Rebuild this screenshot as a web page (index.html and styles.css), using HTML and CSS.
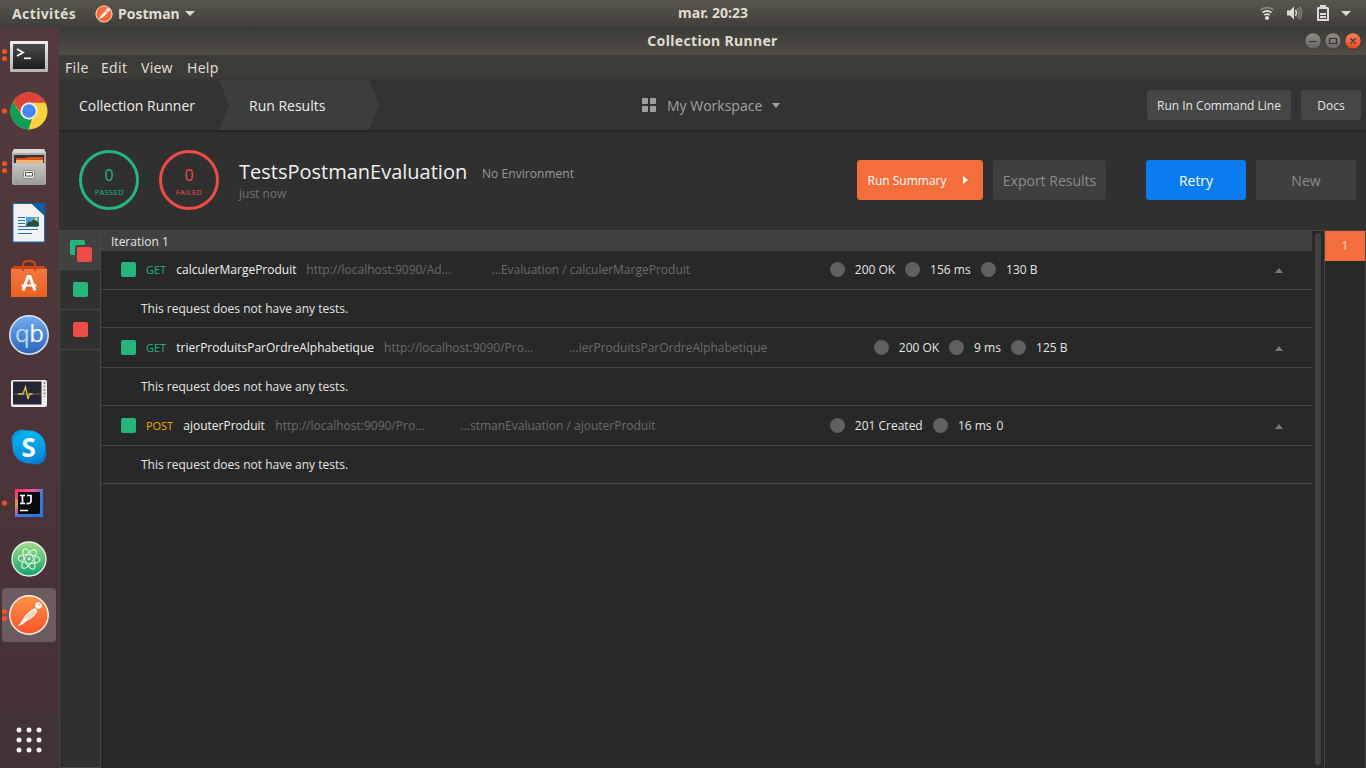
FILE: index.html
```html
<!DOCTYPE html>
<html lang="fr">
<head>
<meta charset="utf-8">
<title>Collection Runner</title>
<link rel="stylesheet" href="styles.css">
</head>
<body>
<div class="desktop">
<header class="topbar">
  <span class="activities">Activités</span>
  <svg class="app-logo" width="18" height="18" viewBox="0 0 40 40"><circle cx="20" cy="20" r="18" fill="#ff6c37" stroke="#f3ddd3" stroke-width="2.2"/><path d="M9 31l4-7 11-11 4 4-11 10z" fill="#fff"/><circle cx="29" cy="11" r="4" fill="#fff"/></svg>
  <span class="app-name">Postman</span>
  <i class="caret app-caret"></i>
  <span class="clock">mar. 20:23</span>
  <svg class="tray" width="106" height="27" viewBox="0 0 106 27">
    <g fill="none" stroke="#dcdad5" stroke-width="1.8"><path d="M.5 10q6.500-4.500 13 0" stroke="#858279"/><path d="M2.500 12.500q4.500-3 9 0M4.300 15q2.700-1.800 5.400 0"/></g><circle cx="7" cy="18" r="2.100" fill="#dcdad5"/>
    <path d="M27 10.500h3l4-4v13l-4-4h-3z" fill="#dcdad5"/><path d="M35.500 10q2 3 0 6" fill="none" stroke="#dcdad5" stroke-width="1.500"/><path d="M37.500 8q3.500 5 0 10M39.500 6.500q4 6.500 0 13" fill="none" stroke="#858279" stroke-width="1.500"/>
    <path d="M60 5h6v2h2l1 1v13H57V8l1-1h2z" fill="#dcdad5"/><path d="M59 9h8v10h-8z" fill="#4a4740"/><path d="M60 13h6v2h-6zM60 16h6v2h-6z" fill="#dcdad5"/>
    <path d="M81 11h10l-5 5z" fill="#dcdad5"/>
  </svg>
</header>
<div class="workarea">
<nav class="dock">
  <svg width="59" height="741" viewBox="0 27 59 741">
    <defs>
      <linearGradient id="term" x2="0" y2="1"><stop stop-color="#4b4b4b"/><stop offset="1" stop-color="#1d1d1d"/></linearGradient>
      <linearGradient id="silver" x2="0" y2="1"><stop stop-color="#eee"/><stop offset="1" stop-color="#b4b4b4"/></linearGradient>
      <linearGradient id="cab" x2="0" y2="1"><stop stop-color="#c6c6c3"/><stop offset="1" stop-color="#9b9b98"/></linearGradient>
      <linearGradient id="bag" x2="0" y2="1"><stop stop-color="#f27b45"/><stop offset="1" stop-color="#e9601f"/></linearGradient>
      <linearGradient id="qb" x2="0" y2="1"><stop stop-color="#72aef0"/><stop offset="1" stop-color="#2c62b8"/></linearGradient>
      <linearGradient id="sky" x2="0" y2="1"><stop stop-color="#00b7f0"/><stop offset="1" stop-color="#0784d7"/></linearGradient>
      <linearGradient id="atom" x2="0" y2="1"><stop stop-color="#a5dd8b"/><stop offset="1" stop-color="#11a36f"/></linearGradient>
      <linearGradient id="pm" x2="0" y2="1"><stop stop-color="#ff9148"/><stop offset="1" stop-color="#ff5427"/></linearGradient>
      <linearGradient id="ij" x2="1" y2="1"><stop stop-color="#fe315d"/><stop offset=".35" stop-color="#f8549d"/><stop offset=".55" stop-color="#4778d7"/><stop offset="1" stop-color="#167bf0"/></linearGradient>
    </defs>
    <rect x="2" y="588" width="54" height="54" rx="4" fill="#fff" fill-opacity=".2"/>
    <g fill="#e95420"><circle cx="4.500" cy="51.500" r="2.600"/><circle cx="4.500" cy="58.500" r="2.600"/><circle cx="4.500" cy="111" r="2.600"/><circle cx="4.500" cy="163.500" r="2.600"/><circle cx="4.500" cy="170.500" r="2.600"/><circle cx="4.500" cy="503" r="2.600"/><circle cx="4.500" cy="611.500" r="2.600"/><circle cx="4.500" cy="618.500" r="2.600"/></g>
    <!-- Terminal -->
    <rect x="10" y="41" width="38" height="31" rx="1" fill="url(#silver)"/><rect x="13" y="44" width="32" height="25" fill="url(#term)"/><path d="M17 49l6 3.500-6 3.500" fill="none" stroke="#f4f4f4" stroke-width="1.900"/><path d="M24 58.300h7" stroke="#fff" stroke-width="1.600"/>
    <!-- Chrome -->
    <circle cx="29" cy="111" r="18.500" fill="#fdd13f"/><path d="M13 101.700A18.500 18.500 0 0 1 45.600 102.700H29A8.500 8.500 0 0 0 21 113.500z" fill="#db4437"/><path d="M13 101.700L21.700 115.400A8.500 8.500 0 0 0 32 119L28.500 129.500A18.500 18.500 0 0 1 13 101.700z" fill="#109d58"/><circle cx="29" cy="111" r="8.400" fill="#f4f4f4"/><circle cx="29" cy="111" r="6.800" fill="#4587f5"/>
    <!-- Files -->
    <path d="M14 149h30l2 4v30l-1 2H13l-1-2v-30z" fill="#adadaa"/><path d="M14 149h30l2 4H12z" fill="#d8d8d5"/><path d="M14 155h30v9H14z" fill="#35302d"/><path d="M16 158h10l2-1h15v7H16z" fill="#d9511b"/><path d="M16 160h27v3H16z" fill="#f4b572"/><path d="M13 163h32v22H13z" fill="url(#cab)"/><rect x="23.500" y="170.500" width="11" height="8" rx="2" fill="#ebebe8" stroke="#888"/><path d="M25.500 172.500h7v3.500h-7z" fill="#fff" stroke="#555"/>
    <!-- Writer -->
    <path d="M13 203.500h19l12.500 12v26.500H13z" fill="#f2f2f2" stroke="#1071b3"/><path d="M31 203h14v13z" fill="#0761a0"/><path d="M18 217.500h7M18 220.500h7M18 223.500h7M18 226.500h20M18 229.500h20M18 233.500h14" stroke="#2377ab" stroke-width="1.200"/><path d="M26 217h13v9H26z" fill="#4aa7e5"/><path d="M26 225l3-4 2 1 3-3 5 4v3H26z" fill="#304e35"/><circle cx="36" cy="219" r="1.500" fill="#f1d83c"/>
    <!-- Software -->
    <path d="M11 269l4-3h28l4 3v28H11z" fill="url(#bag)"/><path d="M11 269l4-3h28l4 3z" fill="#ce4815"/><path d="M23 271v-6q0-4 6-4t6 4v6" fill="none" stroke="#d44417" stroke-width="2"/><path d="M23 290.500l5-14h2l5 14" fill="none" stroke="#fff" stroke-width="3"/><path d="M21.500 285.500h15" stroke="#fff" stroke-width="2.200"/>
    <!-- qBittorrent -->
    <circle cx="29" cy="335" r="19.200" fill="url(#qb)" stroke="#dde8f5" stroke-width="1.500"/><text x="15" y="342" class="qb-text" fill="#bcdcff">q<tspan fill="#fff">b</tspan></text>
    <!-- System monitor -->
    <rect x="11" y="380" width="36" height="27" rx="2" fill="#eee"/><path d="M13 381.500h28.500v23H13z" fill="#282636"/><path d="M14 394h27" stroke="#6b6846"/><path d="M18 394h5l2.500-7 2.500 12 1.500-5h3" fill="none" stroke="#d6c44c" stroke-width="1.300"/><path d="M44.500 382v15" stroke="#999" stroke-width="2" stroke-dasharray="2 1.500"/>
    <!-- Skype -->
    <circle cx="22" cy="440" r="10.500" fill="#0796dc"/><circle cx="36" cy="454" r="10.500" fill="#087ccb"/><circle cx="29" cy="447" r="16.500" fill="url(#sky)"/><text x="21.500" y="456.500" class="skype-text">S</text>
    <!-- IntelliJ -->
    <path d="M15 489h28v28H15z" fill="url(#ij)"/><path d="M15 498l5 5-5 8z" fill="#d39749"/><path d="M18 492h22v22H18z" fill="#090909"/><path d="M20 495.500h5M22.500 495.500v8M20 503.500h5M27 495.500h4v5.500q0 3-4.500 2.500" fill="none" stroke="#fff" stroke-width="1.700"/><path d="M20 510.500h8" stroke="#fff" stroke-width="1.500"/>
    <!-- Atom -->
    <circle cx="29" cy="559" r="17" fill="url(#atom)" stroke="#eef2ee" stroke-width="1.300"/><g fill="none" stroke="#e4f7e6" stroke-width="1"><ellipse cx="29" cy="559" rx="11" ry="4.300" transform="rotate(5 29 559)"/><ellipse cx="29" cy="559" rx="11" ry="4.300" transform="rotate(65 29 559)"/><ellipse cx="29" cy="559" rx="11" ry="4.300" transform="rotate(125 29 559)"/></g><circle cx="29" cy="559" r="1.300" fill="#fff"/>
    <!-- Postman -->
    <circle cx="29" cy="615" r="19.200" fill="url(#pm)" stroke="#fff4ee" stroke-width="1.400"/><path d="M17.500 626l3-3 4-6.500q5-6 10.500-8.500l2.500 3q-3 6-10 9.500l-6 4.500z" fill="#fff"/><path d="M25 618l9-7M27.500 619l8-7" stroke="#f6794a" stroke-width=".8"/><circle cx="38.500" cy="605.500" r="3.300" fill="#fff"/><path d="M38 605l2.500-1" stroke="#f6794a"/>
    <g fill="#f1efee"><circle cx="19" cy="730" r="2.500"/><circle cx="29" cy="730" r="2.500"/><circle cx="39" cy="730" r="2.500"/><circle cx="19" cy="740" r="2.500"/><circle cx="29" cy="740" r="2.500"/><circle cx="39" cy="740" r="2.500"/><circle cx="19" cy="750" r="2.500"/><circle cx="29" cy="750" r="2.500"/><circle cx="39" cy="750" r="2.500"/></g>
  </svg>
</nav>
<main class="window">
  <div class="titlebar"><span class="title">Collection Runner</span>
    <svg class="controls" width="58" height="20" viewBox="0 0 58 20"><defs><linearGradient id="btn" x2="0" y2="1"><stop stop-color="#918f86"/><stop offset="1" stop-color="#66645d"/></linearGradient><linearGradient id="close" x2="0" y2="1"><stop stop-color="#f98261"/><stop offset="1" stop-color="#df481a"/></linearGradient></defs><g stroke="#34322e" stroke-width=".8"><circle cx="9" cy="10" r="8.200" fill="url(#btn)"/><circle cx="29" cy="10" r="8.200" fill="url(#btn)"/><circle cx="49" cy="10" r="8.200" fill="url(#close)"/></g><path d="M5 10.500h8M25.500 7.500h7v5h-7zM46.500 7.500l5 5M51.500 7.500l-5 5" fill="none" stroke="#35332e" stroke-width="1.200"/></svg>
  </div>
  <div class="menubar"><span class="m-file">File</span><span class="m-edit">Edit</span><span class="m-view">View</span><span class="m-help">Help</span></div>
  <div class="header">
    <div class="crumb first">Collection Runner</div>
    <div class="crumb active">Run Results</div>
    <div class="workspace"><svg width="14" height="14" viewBox="0 0 14 14" fill="#a0a0a0"><rect width="6" height="6" rx=".7"/><rect x="8" width="6" height="6" rx=".7"/><rect y="8" width="6" height="6" rx=".7"/><rect x="8" y="8" width="6" height="6" rx=".7"/></svg><span>My Workspace</span><i class="caret"></i></div>
    <div class="header-actions"><button class="btn-cli">Run In Command Line</button><button class="btn-docs">Docs</button></div>
  </div>
  <section class="summary">
    <div class="score passed"><b>0</b><span>PASSED</span></div>
    <div class="score failed"><b>0</b><span>FAILED</span></div>
    <div class="run-info"><div class="run-line"><h1>TestsPostmanEvaluation</h1><span class="environment">No Environment</span></div><div class="when">just now</div></div>
    <div class="run-actions"><button class="primary">Run Summary<i></i></button><button class="export">Export Results</button><button class="retry">Retry</button><button class="new">New</button></div>
  </section>
  <section class="results">
    <aside class="filters"><div class="filter selected"><svg width="22" height="22" viewBox="0 0 22 22"><rect width="15" height="15" rx="2" fill="#26b47f"/><rect x="5" y="5" width="17" height="17" rx="3" fill="#414141"/><rect x="7" y="7" width="15" height="15" rx="2" fill="#ed4b48"/></svg></div><div class="filter"><i class="square"></i></div><div class="filter"><i class="square red"></i></div></aside>
    <div class="list">
      <div class="iteration">Iteration 1</div>
      <div class="request row-one"><i class="square"></i><span class="method">GET</span><span class="name">calculerMargeProduit</span><span class="url">http://localhost:9090/Ad...</span><span class="path">...Evaluation / calculerMargeProduit</span><i class="dot"></i><span class="status">200 OK</span><i class="dot"></i><span class="time">156 ms</span><i class="dot"></i><span class="size">130 B</span><i class="up"></i></div>
      <div class="tests">This request does not have any tests.</div>
      <div class="request row-two"><i class="square"></i><span class="method">GET</span><span class="name">trierProduitsParOrdreAlphabetique</span><span class="url">http://localhost:9090/Pro...</span><span class="path">...ierProduitsParOrdreAlphabetique</span><i class="dot"></i><span class="status">200 OK</span><i class="dot"></i><span class="time">9 ms</span><i class="dot"></i><span class="size">125 B</span><i class="up"></i></div>
      <div class="tests">This request does not have any tests.</div>
      <div class="request row-three"><i class="square"></i><span class="method post">POST</span><span class="name">ajouterProduit</span><span class="url">http://localhost:9090/Pro...</span><span class="path">...stmanEvaluation / ajouterProduit</span><i class="dot"></i><span class="status">201 Created</span><i class="dot"></i><span class="time">16 ms</span><span class="size">0</span><i class="up"></i></div>
      <div class="tests">This request does not have any tests.</div>
    </div>
    <div class="scroll"><i></i></div>
    <div class="iterations"><div>1</div></div>
  </section>
</main>
</div>
</div>
</body>
</html>
```
FILE: styles.css
```css
* { box-sizing: border-box; }
body { margin: 0; background: #282828; font: 12px "Open Sans", sans-serif; color: #e4e4e4; }
button { border: 0; padding: 0; margin: 0; font: inherit; color: inherit; }
.desktop { width: 1366px; height: 768px; overflow: hidden; display: flex; flex-direction: column; white-space: nowrap; }
.topbar { position: relative; height: 27px; flex: none; display: flex; align-items: center; padding-left: 12px; background: linear-gradient(#59564d, #403e39); color: #dfdbd2; font: bold 14px "Noto Sans", sans-serif; }
.activities { width: 83px; letter-spacing: .38px; }
.app-logo { margin-right: 5px; }
.app-name { width: 67px; }
.caret { display: block; width: 0; height: 0; border: 5px solid transparent; border-top-color: currentColor; border-bottom: 0; }
.clock { position: absolute; left: 678px; top: 3px; letter-spacing: .05px; }
.tray { position: absolute; left: 1260px; top: 0; }
.workarea { display: flex; height: 741px; }
.dock { position: relative; z-index: 2; width: 59px; flex: none; background: linear-gradient(#533a3e, #463137 92%, #403236 93%, #403236); }
.dock svg { display: block; }
.qb-text { font: 24px "Open Sans", sans-serif; letter-spacing: -.5px; }
.skype-text { font: bold 26px "Open Sans", sans-serif; fill: #fff; }
.window { width: 1307px; display: flex; flex-direction: column; }
.titlebar { position: relative; height: 28px; flex: none; background: linear-gradient(#3b3a35, #504d45); text-align: center; font: bold 14px/28px "Noto Sans", sans-serif; letter-spacing: .35px; color: #dfdbd2; }
.controls { position: absolute; right: 4px; top: 4px; }
.menubar { height: 25px; flex: none; background: #3c3b37; display: flex; padding-left: 6px; font: 14px/25px "Noto Sans", sans-serif; letter-spacing: .3px; color: #dfdbd2; }
.m-file { width: 36px; }
.m-edit { width: 40px; }
.m-view { width: 46px; }
.header { position: relative; z-index: 1; height: 50px; flex: none; display: flex; background: #333; box-shadow: 0 1px 3px #1b1b1b; line-height: 51px; font-size: 14px; }
.crumb { color: #ececec; }
.first { width: 160px; padding-left: 20px; }
.active { width: 160px; padding-left: 30px; background: #3d3d3d; clip-path: polygon(0 0, 150px 0, 160px 25px, 150px 50px, 0 50px, 10px 25px); }
.workspace { display: flex; align-items: center; margin-left: 263px; color: #a0a0a0; }
.workspace span { width: 105px; margin-left: 11px; }
.workspace .caret { border-width: 5px 4.5px 0; }
.header-actions { margin-left: auto; padding: 10px 5px 10px 0; display: flex; gap: 10px; font-size: 12px; line-height: 30px; }
.header-actions button { height: 30px; padding-top: 1px; line-height: 29px; background: #464646; border-radius: 3px; }
.btn-cli { width: 144px; }
.btn-docs { width: 60px; }
.summary { height: 100px; flex: none; padding: 20px 10px 20px 20px; display: flex; background: #303030; }
.score { width: 60px; height: 60px; flex: none; border: 3px solid; border-radius: 50%; margin-right: 20px; text-align: center; display: flex; flex-direction: column; align-items: center; }
.score b { font: 16px/20px "Open Sans", sans-serif; margin-top: 12px; }
.score span { font-size: 7px; line-height: 10px; margin-top: 3px; letter-spacing: .2px; transform: scaleX(1.1); }
.passed { color: #26b47f; }
.failed { color: #ed4b48; }
.run-line { display: flex; align-items: center; height: 30px; margin-top: 8px; }
.run-line h1 { width: 243px; margin: 0; font: 20px/28px "Open Sans", sans-serif; color: #f0f0f0; position: relative; top: -1px; }
.environment { color: #989898; letter-spacing: .05px; }
.when { color: #737373; line-height: 14px; margin-top: -1px; }
.run-actions { display: flex; margin: 10px 0 0 auto; }
.run-actions button { height: 40px; border-radius: 3px; font-size: 14px; line-height: 40px; padding-top: 1px; }
.run-actions .primary { display: flex; align-items: center; width: 126px; padding-left: 10.5px; padding-top: 1px; margin-right: 10px; background: #f36e3c; color: #fff; font-size: 12px; }
.primary i { margin-left: 16.5px; margin-top: -1px; border: 4px solid transparent; border-left: 5px solid #fff; border-right: 0; }
.run-actions .export { width: 113px; margin-right: 40px; }
.run-actions .export, .run-actions .new { background: #3f3f3f; color: #8b8b8b; }
.run-actions .retry { width: 100px; margin-right: 10px; background: #097bed; color: #fff; }
.run-actions .new { width: 100px; }
.results { display: flex; flex: 1; min-height: 0; border-top: 1px solid #464646; background: #282828; }
.filters { width: 42px; border: 1px solid #464646; border-top: 0; background: #303030; }
.filter { height: 40px; display: flex; align-items: center; justify-content: center; border-bottom: 1px solid #464646; }
.filter.selected { height: 39px; background: #414141; padding-top: 1px; padding-left: 2px; }
.square { flex: none; width: 15px; height: 15px; border-radius: 2px; background: #26b47f; }
.red { background: #ed4b48; }
.list { width: 1211px; }
.iteration { height: 20px; padding-left: 10px; line-height: 21px; background: #404040; }
.request { height: 40px; padding: 0 29px 1px 20px; display: flex; align-items: center; border-bottom: 1px solid #464646; }
.row-one { height: 39px; padding-bottom: 2px; }
.tests { height: 38px; padding-left: 40px; line-height: 38px; border-bottom: 1px solid #464646; }
.method { color: #26b47f; font-size: 11px; width: 30.3px; margin-left: 10px; letter-spacing: -.1px; }
.post { color: #f5a90c; width: 37.3px; }
.name { width: 130px; color: #f0f0f0; }
.url, .path { color: #6b6b6b; }
.url { width: 185.2px; }
.path { width: 338.5px; }
.dot { width: 15px; height: 15px; border-radius: 50%; background: #606060; margin-right: 9.8px; flex: none; }
.status { width: 50.5px; }
.time { width: 51.2px; }
.row-two .name { width: 207.8px; }
.row-two .path { width: 304.7px; }
.row-two .time { width: 37.2px; }
.row-three .name { width: 92px; }
.row-three .path { width: 369.5px; }
.row-three .status { width: 78.3px; }
.row-three .time { width: 38.5px; }
.request .status, .request .time { flex: none; }
.up { margin-left: auto; margin-top: 3px; border: 4px solid transparent; border-bottom: 5px solid #777; border-top: 0; }
.scroll { width: 12px; padding: 2px 0 3px 3px; }
.scroll i { display: block; height: 100%; width: 6px; border-radius: 3px; background: #404040; }
.iterations { width: 42px; border-left: 1px solid #464646; border-right: 1px solid #464646; }
.iterations div { height: 30px; line-height: 30px; text-align: center; background: #f36e3c; color: #f8dacd; }
```
